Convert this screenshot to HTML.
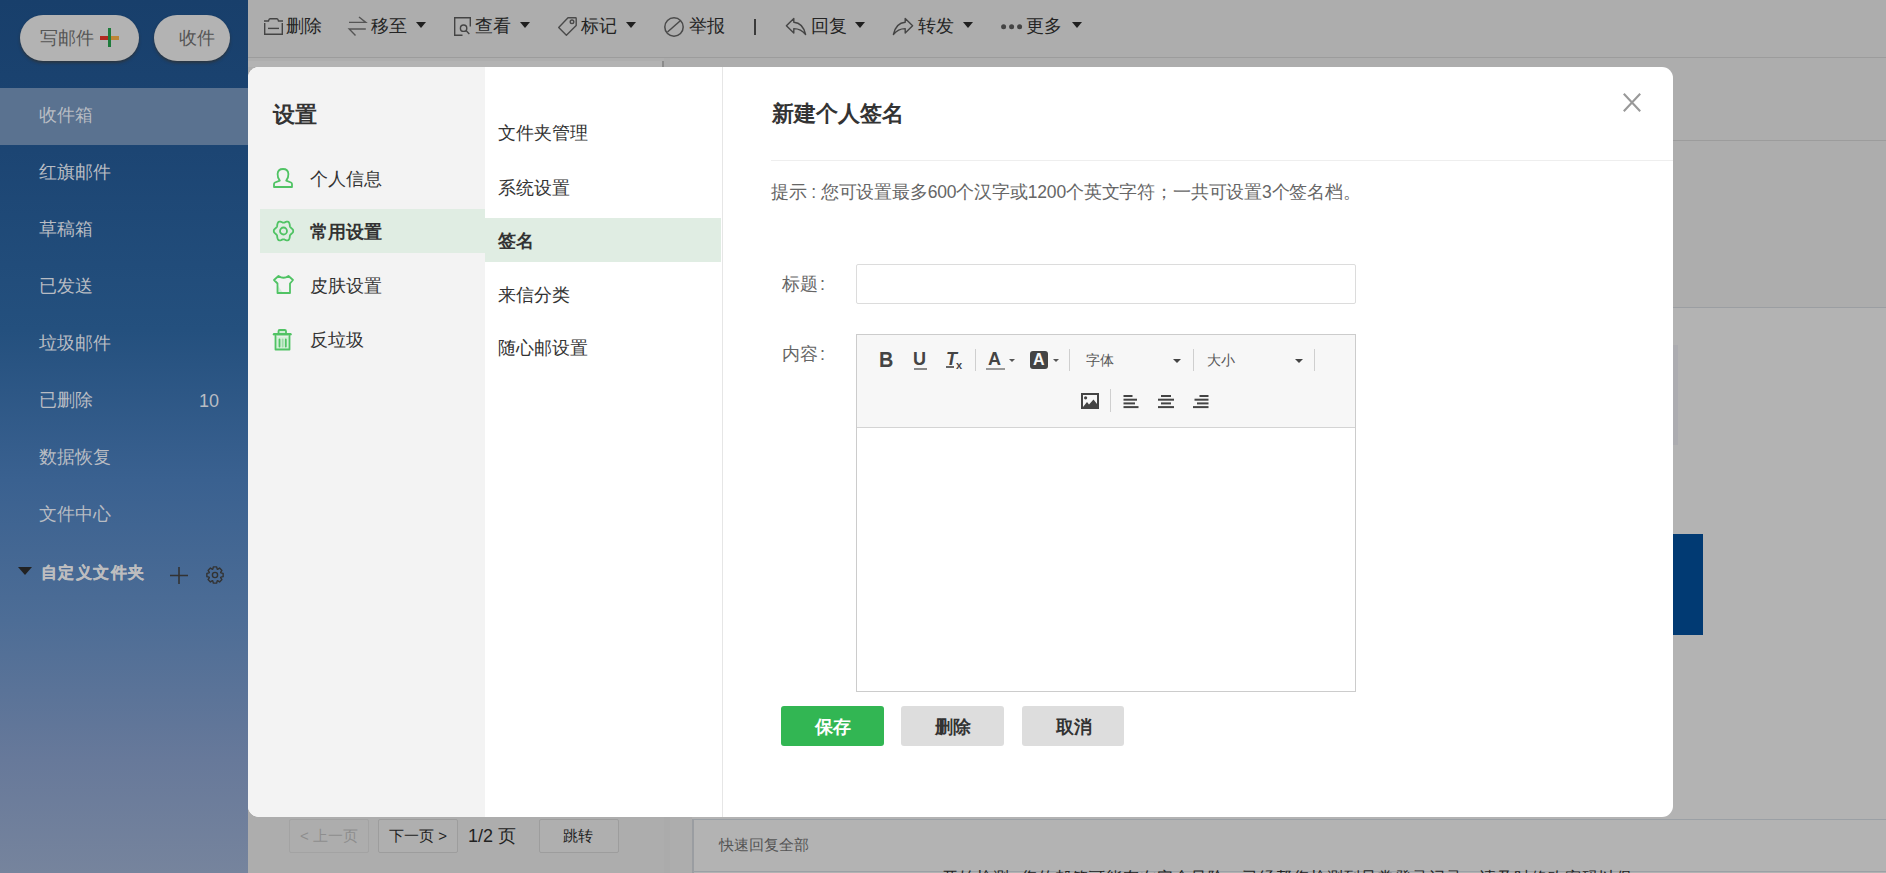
<!DOCTYPE html>
<html><head><meta charset="utf-8">
<style>
*{box-sizing:border-box;margin:0;padding:0}
html,body{width:1886px;height:873px;overflow:hidden}
body{position:relative;background:#adadad;font-family:"Liberation Sans",sans-serif;color:#333}
.a{position:absolute}
.t{position:absolute;white-space:nowrap;line-height:1}
svg{position:absolute;overflow:visible}
#side{left:0;top:0;width:248px;height:873px;background:linear-gradient(to bottom,#183f6b 0px,#1c4573 150px,#24507e 330px,#3a6190 480px,#4d6d96 620px,#67799a 760px,#76849d 873px)}
.pill{position:absolute;top:15px;height:46px;border-radius:23px;background:#b3b3b3;box-shadow:0 2px 3px rgba(50,48,45,.7)}
.si{position:absolute;left:39px;font-size:18px;color:#b8bcc3;white-space:nowrap;line-height:1}
#tb{left:248px;top:0;width:1638px;height:58px;border-bottom:1px solid #9c9c9c;background:#adadad}
.tt{position:absolute;top:17px;font-size:18px;color:#242424;line-height:1;white-space:nowrap}
.car{position:absolute;top:22px;width:0;height:0;border-left:5px solid transparent;border-right:5px solid transparent;border-top:6px solid #1f1f1f}
#modal{left:248px;top:67px;width:1425px;height:750px;background:#fff;border-radius:11px;overflow:hidden}
.li{position:absolute;font-size:18px;color:#333;line-height:1;white-space:nowrap}
.ic{stroke:#50c364;fill:none;stroke-width:1.8;stroke-linejoin:round;stroke-linecap:round}
.btn{position:absolute;top:639px;height:40px;border-radius:3px;font-size:18px;font-weight:bold;line-height:40px;text-align:center}
.ed{fill:#444}
.sep{position:absolute;width:1px;background:#cfcfcf}
.ecar{position:absolute;width:0;height:0;border-left:4px solid transparent;border-right:4px solid transparent;border-top:4px solid #444}
</style></head><body>
<!-- sidebar -->
<div id="side" class="a">
  <div class="pill" style="left:20px;width:119px"></div>
  <div class="pill" style="left:154px;width:76px"></div>
  <div class="t" style="left:40px;top:29px;font-size:18px;color:#555">写邮件</div>
  <div class="a" style="left:100px;top:36px;width:8px;height:3.5px;background:#b12a21"></div>
  <div class="a" style="left:111px;top:36px;width:8px;height:3.5px;background:#bd8536"></div>
  <div class="a" style="left:108px;top:28px;width:3px;height:19px;background:#1e7b3b"></div>
  <div class="t" style="left:179px;top:29px;font-size:18px;color:#555">收件</div>
  <div class="a" style="left:0;top:88px;width:248px;height:57px;background:#5a7290"></div>
  <div class="si" style="top:106px">收件箱</div>
  <div class="si" style="top:163px">红旗邮件</div>
  <div class="si" style="top:220px">草稿箱</div>
  <div class="si" style="top:277px">已发送</div>
  <div class="si" style="top:334px">垃圾邮件</div>
  <div class="si" style="top:391px">已删除</div>
  <div class="si" style="top:392px;left:199px">10</div>
  <div class="si" style="top:448px">数据恢复</div>
  <div class="si" style="top:505px">文件中心</div>
  <div class="si" style="top:565px;left:41px;font-size:16px;font-weight:bold;letter-spacing:1.4px;color:#bdbdbf;-webkit-text-stroke:0.3px #bdbdbf">自定义文件夹</div>
  <div class="a" style="left:18px;top:567px;width:0;height:0;border-left:7.5px solid transparent;border-right:7.5px solid transparent;border-top:8px solid #222"></div>
  <svg style="left:170px;top:567px" width="18" height="17"><path d="M9,0V17M0,8.5H18" stroke="#333" stroke-width="1.6" fill="none"/></svg>
  <svg style="left:206px;top:566px" width="18" height="18"><path d="M14.80,6.82 17.13,7.35 17.13,10.65 14.80,11.18 14.65,11.56 15.92,13.59 13.59,15.92 11.56,14.65 11.18,14.80 10.65,17.13 7.35,17.13 6.82,14.80 6.44,14.65 4.41,15.92 2.08,13.59 3.35,11.56 3.20,11.18 0.87,10.65 0.87,7.35 3.20,6.82 3.35,6.44 2.08,4.41 4.41,2.08 6.44,3.35 6.82,3.20 7.35,0.87 10.65,0.87 11.18,3.20 11.56,3.35 13.59,2.08 15.92,4.41 14.65,6.44Z" stroke="#333" stroke-width="1.4" fill="none" stroke-linejoin="round"/><circle cx="9" cy="9" r="2.6" stroke="#333" stroke-width="1.4" fill="none"/></svg>
</div>
<!-- toolbar -->
<div id="tb" class="a"></div>
<svg style="left:264px;top:18px" width="19" height="17"><g stroke="#444" stroke-width="1.4" fill="none"><path d="M0,3H4.5Q5,0.7 6,0.7H13Q14,0.7 14.5,3H19"/><path d="M0.7,5V16.3H18.3V5"/><path d="M4,10.4H15"/></g></svg>
<div class="tt" style="left:286px">删除</div>
<svg style="left:349px;top:17px" width="17" height="19"><g stroke="#555" stroke-width="1.4" fill="none"><path d="M0,5.4H16.8L10,0"/><path d="M16.8,12H0.2L6.5,18.6"/></g></svg>
<div class="tt" style="left:371px">移至</div>
<div class="car" style="left:416px"></div>
<svg style="left:454px;top:17px" width="17" height="19"><g stroke="#444" stroke-width="1.4" fill="none"><path d="M8.5,18.3H0.7V0.7H16.3V9.5"/><circle cx="9.6" cy="11.2" r="3.2"/><path d="M12,13.6L15.3,17"/></g></svg>
<div class="tt" style="left:475px">查看</div>
<div class="car" style="left:520px"></div>
<svg style="left:558px;top:17px" width="19" height="19"><g stroke="#4a4a4a" stroke-width="1.4" fill="none" stroke-linejoin="round"><path d="M10,0.7H17.5Q18.2,0.7 18.2,1.4V8.5L8.4,18.3L0.7,10.4Z"/><circle cx="14" cy="4.8" r="1.8"/></g></svg>
<div class="tt" style="left:581px">标记</div>
<div class="car" style="left:626px"></div>
<svg style="left:664px;top:17px" width="20" height="20"><g stroke="#4a4a4a" stroke-width="1.5" fill="none"><circle cx="10" cy="10" r="9.2"/><path d="M3.5,15L16.3,3.7"/></g></svg>
<div class="tt" style="left:689px">举报</div>
<div class="a" style="left:754px;top:19px;width:1.5px;height:16px;background:#3a3a3a"></div>
<svg style="left:786px;top:18px" width="20" height="17"><path d="M0.4,7.8L7.8,0.5V4.2Q17,4.8 19.6,16.5Q15,10.6 7.8,10.6V15Z" stroke="#444" stroke-width="1.4" fill="none" stroke-linejoin="round"/></svg>
<div class="tt" style="left:811px">回复</div>
<div class="car" style="left:855px"></div>
<svg style="left:893px;top:18px" width="20" height="17"><path d="M19.6,7.8L12.2,0.5V4.2Q3,4.8 0.4,16.5Q5,10.6 12.2,10.6V15Z" stroke="#444" stroke-width="1.4" fill="none" stroke-linejoin="round"/></svg>
<div class="tt" style="left:918px">转发</div>
<div class="car" style="left:963px"></div>
<svg style="left:1001px;top:24px" width="22" height="6"><g fill="#444"><circle cx="2.6" cy="2.8" r="2.5"/><circle cx="10.6" cy="2.8" r="2.5"/><circle cx="18.6" cy="2.8" r="2.5"/></g></svg>
<div class="tt" style="left:1026px">更多</div>
<div class="car" style="left:1072px"></div>
<!-- background behind modal -->
<div class="a" style="left:248px;top:58px;width:416px;height:3px;background:#aeaeae"></div>
<div class="a" style="left:248px;top:61px;width:416px;height:6px;background:#b3b3b3"></div>
<div class="a" style="left:662px;top:61px;width:2px;height:6px;background:#8b8b8b"></div>
<div class="a" style="left:664px;top:58px;width:6px;height:815px;background:#ababab"></div>
<div class="a" style="left:692px;top:140px;width:1194px;height:1px;background:#9c9c9c"></div>
<div class="a" style="left:692px;top:307px;width:1194px;height:1px;background:#9b9ea2"></div>
<div class="a" style="left:692px;top:308px;width:1194px;height:511px;background:#b3b3b3"></div>
<div class="a" style="left:1673px;top:345px;width:5px;height:100px;background:#acacb0"></div>
<div class="a" style="left:692px;top:819px;width:1194px;height:54px;background:#b3b3b3;border-top:1px solid #9ba0a5;border-left:2px solid #9a9da1"></div>
<div class="a" style="left:693px;top:871px;width:1193px;height:1px;background:#9ba0a5"></div>
<div class="t" style="left:719px;top:837px;font-size:15px;color:#555">快速回复全部</div>
<div class="a" style="left:289px;top:819px;width:80px;height:34px;border:1px solid #a3a3a3;border-radius:2px"></div>
<div class="t" style="left:300px;top:828px;font-size:15px;color:#8e8e8e">&lt; 上一页</div>
<div class="a" style="left:378px;top:819px;width:80px;height:34px;border:1px solid #9d9d9d;border-radius:2px;background:#afafaf"></div>
<div class="t" style="left:389px;top:828px;font-size:15px;color:#222">下一页 &gt;</div>
<div class="t" style="left:468px;top:827px;font-size:18px;color:#222">1/2 页</div>
<div class="a" style="left:539px;top:819px;width:80px;height:34px;border:1px solid #9d9d9d;border-radius:2px;background:#afafaf"></div>
<div class="t" style="left:563px;top:828px;font-size:15px;color:#222">跳转</div>
<div class="t" style="left:942px;top:870px;font-size:16px;color:#222;letter-spacing:1px">开始检测: 您的邮箱可能存在安全风险，已经帮您检测到异常登录记录，请及时修改密码以保</div>
<!-- blue floating -->
<div class="a" style="left:1673px;top:534px;width:30px;height:101px;background:#013a73"></div>
<!-- modal -->
<div id="modal" class="a">
  <div class="a" style="left:0;top:0;width:237px;height:750px;background:#f3f3f3"></div>
  <div class="a" style="left:237px;top:0;width:238px;height:750px;background:#fff;border-right:1px solid #e6e6e6"></div>
  <div class="t" style="left:25px;top:37px;font-size:22px;font-weight:bold;color:#333">设置</div>
  <div class="a" style="left:12px;top:142px;width:225px;height:44px;background:#e0ede3"></div>
  <svg style="left:25px;top:101px" width="20" height="20"><path class="ic" d="M6.8,12.6C5.2,10.8 4.5,8.5 4.6,6C4.8,2.8 7,1 10,1C13,1 15.2,2.8 15.4,6C15.5,8.5 14.8,10.8 13.2,12.6L18,14.5C18.7,14.8 19,15.3 19,16V19H1V16C1,15.3 1.3,14.8 2,14.5Z"/></svg>
  <div class="li" style="left:62px;top:103px">个人信息</div>
  <svg style="left:25px;top:154px" width="21" height="20"><path class="ic" d="M20.2,10.0 20.1,10.9 19.6,11.7 18.9,12.4 18.2,13.0 17.6,13.6 17.1,14.1 16.9,14.8 16.8,15.7 16.7,16.6 16.4,17.6 16.0,18.5 15.4,19.1 14.6,19.4 13.7,19.4 12.8,19.1 11.9,18.7 11.2,18.4 10.5,18.3 9.8,18.4 9.1,18.7 8.2,19.1 7.3,19.4 6.4,19.4 5.6,19.1 5.0,18.5 4.6,17.6 4.3,16.6 4.2,15.7 4.1,14.8 3.9,14.1 3.4,13.6 2.8,13.0 2.1,12.4 1.4,11.7 0.9,10.9 0.8,10.0 0.9,9.1 1.4,8.3 2.1,7.6 2.8,7.0 3.4,6.4 3.9,5.9 4.1,5.2 4.2,4.3 4.3,3.4 4.6,2.4 5.0,1.5 5.6,0.9 6.4,0.6 7.3,0.6 8.2,0.9 9.1,1.3 9.8,1.6 10.5,1.7 11.2,1.6 11.9,1.3 12.8,0.9 13.7,0.6 14.6,0.6 15.4,0.9 16.0,1.5 16.4,2.4 16.7,3.4 16.8,4.3 16.9,5.2 17.1,5.9 17.6,6.4 18.2,7.0 18.9,7.6 19.6,8.3 20.1,9.1Z"/><circle class="ic" cx="10.5" cy="10" r="3.5"/></svg>
  <div class="li" style="left:62px;top:156px;font-weight:bold">常用设置</div>
  <svg style="left:25px;top:208px" width="21" height="19"><path d="M4.5,10L4.5,18H10Z" fill="#d3efd9"/><path class="ic" d="M5.5,1Q10.5,4.5 15.5,1L20,5L17,8.5V18H4.5V8.5L1,5Z"/></svg>
  <div class="li" style="left:62px;top:210px">皮肤设置</div>
  <svg style="left:25px;top:262px" width="19" height="22"><path d="M2.5,7.5H16.5V21H2.5Z" fill="#d5f0da"/><path d="M6,1.5H12.5V4.5H6Z" fill="#cdeed4"/><g class="ic"><path d="M1,5.2H17.5" stroke-width="2.4"/><path d="M5.5,4.5V2.2Q5.5,1 6.7,1H11.8Q13,1 13,2.2V4.5"/><path d="M2.5,7V20.5H16.5V7"/><path d="M6.5,10.5V17.5M12.8,10.5V17.5"/><path d="M9.7,10.5V17.5" stroke="#9edcaa"/></g></svg>
  <div class="li" style="left:62px;top:264px">反垃圾</div>

  <div class="a" style="left:237px;top:151px;width:236px;height:44px;background:#e0ede3"></div>
  <div class="li" style="left:250px;top:57px">文件夹管理</div>
  <div class="li" style="left:250px;top:112px">系统设置</div>
  <div class="li" style="left:250px;top:165px;font-weight:bold">签名</div>
  <div class="li" style="left:250px;top:219px">来信分类</div>
  <div class="li" style="left:250px;top:272px">随心邮设置</div>

  <div class="t" style="left:524px;top:36px;font-size:22px;font-weight:bold;color:#333">新建个人签名</div>
  <div class="a" style="left:523px;top:93px;width:902px;height:1px;background:#eeeeee"></div>
  <svg style="left:1375px;top:26px" width="18" height="19"><path d="M0.8,0.8L17.2,18.2M17.2,0.8L0.8,18.2" stroke="#999" stroke-width="2.1" fill="none"/></svg>
  <div class="t" style="left:523px;top:117px;font-size:17.5px;letter-spacing:-0.17px;color:#666">提示 : 您可设置最多600个汉字或1200个英文字符；一共可设置3个签名档。</div>
  <div class="t" style="left:534px;top:208px;font-size:18px;color:#666">标题</div><div class="t" style="left:572px;top:208px;font-size:18px;color:#666">:</div>
  <div class="a" style="left:608px;top:197px;width:500px;height:40px;border:1px solid #dcdcdc;border-radius:2px"></div>
  <div class="t" style="left:534px;top:278px;font-size:18px;color:#666">内容</div><div class="t" style="left:572px;top:278px;font-size:18px;color:#666">:</div>
  <div class="a" style="left:608px;top:267px;width:500px;height:358px;border:1px solid #cccccc"></div>
  <div class="a" style="left:609px;top:268px;width:498px;height:93px;background:#f7f7f7;border-bottom:1px solid #d4d4d4"></div>
</div>
<!-- editor toolbar (absolute page coords) -->
<div class="t" style="left:879px;top:349px;font-size:22px;font-weight:bold;color:#444;transform:scaleX(.9);transform-origin:0 0">B</div>
<div class="t" style="left:913px;top:350px;font-size:18px;font-weight:bold;color:#444">U</div>
<div class="a" style="left:914px;top:368px;width:13px;height:1.5px;background:#888"></div>
<div class="t" style="left:946px;top:350px;font-size:18px;font-weight:bold;font-style:italic;color:#444">T</div>
<div class="a" style="left:946px;top:366px;width:8px;height:1.5px;background:#666"></div>
<div class="t" style="left:956px;top:360px;font-size:11px;font-weight:bold;color:#444">x</div>
<div class="sep" style="left:975px;top:349px;height:22px"></div>
<div class="t" style="left:988px;top:350px;font-size:18px;font-weight:bold;color:#444">A</div>
<div class="a" style="left:986px;top:368px;width:19px;height:2px;background:#999"></div>
<div class="ecar" style="left:1009px;top:359px;border-left-width:3.5px;border-right-width:3.5px;border-top-width:3.5px;border-top-color:#555"></div>
<div class="a" style="left:1030px;top:351px;width:18px;height:18px;background:#444;border-radius:3px"></div>
<div class="t" style="left:1033px;top:352px;font-size:16px;font-weight:bold;color:#f7f7f7">A</div>
<div class="ecar" style="left:1053px;top:359px;border-left-width:3.5px;border-right-width:3.5px;border-top-width:3.5px;border-top-color:#555"></div>
<div class="sep" style="left:1069px;top:349px;height:22px"></div>
<div class="t" style="left:1086px;top:353px;font-size:14px;color:#555">字体</div>
<div class="ecar" style="left:1173px;top:359px"></div>
<div class="sep" style="left:1193px;top:349px;height:22px"></div>
<div class="t" style="left:1207px;top:353px;font-size:14px;color:#555">大小</div>
<div class="ecar" style="left:1295px;top:359px"></div>
<div class="sep" style="left:1314px;top:349px;height:22px"></div>
<svg style="left:1081px;top:393px" width="18" height="16"><rect x="1" y="1" width="16" height="14" stroke="#444" stroke-width="2" fill="none"/><circle cx="4.6" cy="4.8" r="1.6" fill="#444"/><path d="M2,14L6,9L8,11.5L12.5,6.5L16,11V14Z" fill="#444"/></svg>
<div class="sep" style="left:1110px;top:389px;height:23px"></div>
<svg style="left:1123px;top:394px" width="16" height="15"><g fill="#444"><rect x="0.5" y="1" width="9" height="2"/><rect x="0.5" y="4.7" width="13.5" height="2"/><rect x="0.5" y="8.4" width="11.5" height="2"/><rect x="0.5" y="12.1" width="15" height="2"/></g></svg>
<svg style="left:1158px;top:394px" width="16" height="15"><g fill="#444"><rect x="3" y="1" width="10" height="2"/><rect x="0" y="4.7" width="16" height="2"/><rect x="3" y="8.4" width="10" height="2"/><rect x="0" y="12.1" width="16" height="2"/></g></svg>
<svg style="left:1193px;top:394px" width="16" height="15"><g fill="#444"><rect x="6.5" y="1" width="9" height="2"/><rect x="1.5" y="4.7" width="14" height="2"/><rect x="4" y="8.4" width="11.5" height="2"/><rect x="0" y="12.1" width="15.5" height="2"/></g></svg>
<!-- buttons -->
<div class="a" style="left:781px;top:706px;width:103px;height:40px;border-radius:3px;background:#32b653"></div>
<div class="t" style="left:815px;top:718px;font-size:18px;font-weight:bold;color:#fff">保存</div>
<div class="a" style="left:901px;top:706px;width:103px;height:40px;border-radius:3px;background:#dddddd"></div>
<div class="t" style="left:935px;top:718px;font-size:18px;font-weight:bold;color:#333">删除</div>
<div class="a" style="left:1022px;top:706px;width:102px;height:40px;border-radius:3px;background:#dddddd"></div>
<div class="t" style="left:1056px;top:718px;font-size:18px;font-weight:bold;color:#333">取消</div>
</body></html>
